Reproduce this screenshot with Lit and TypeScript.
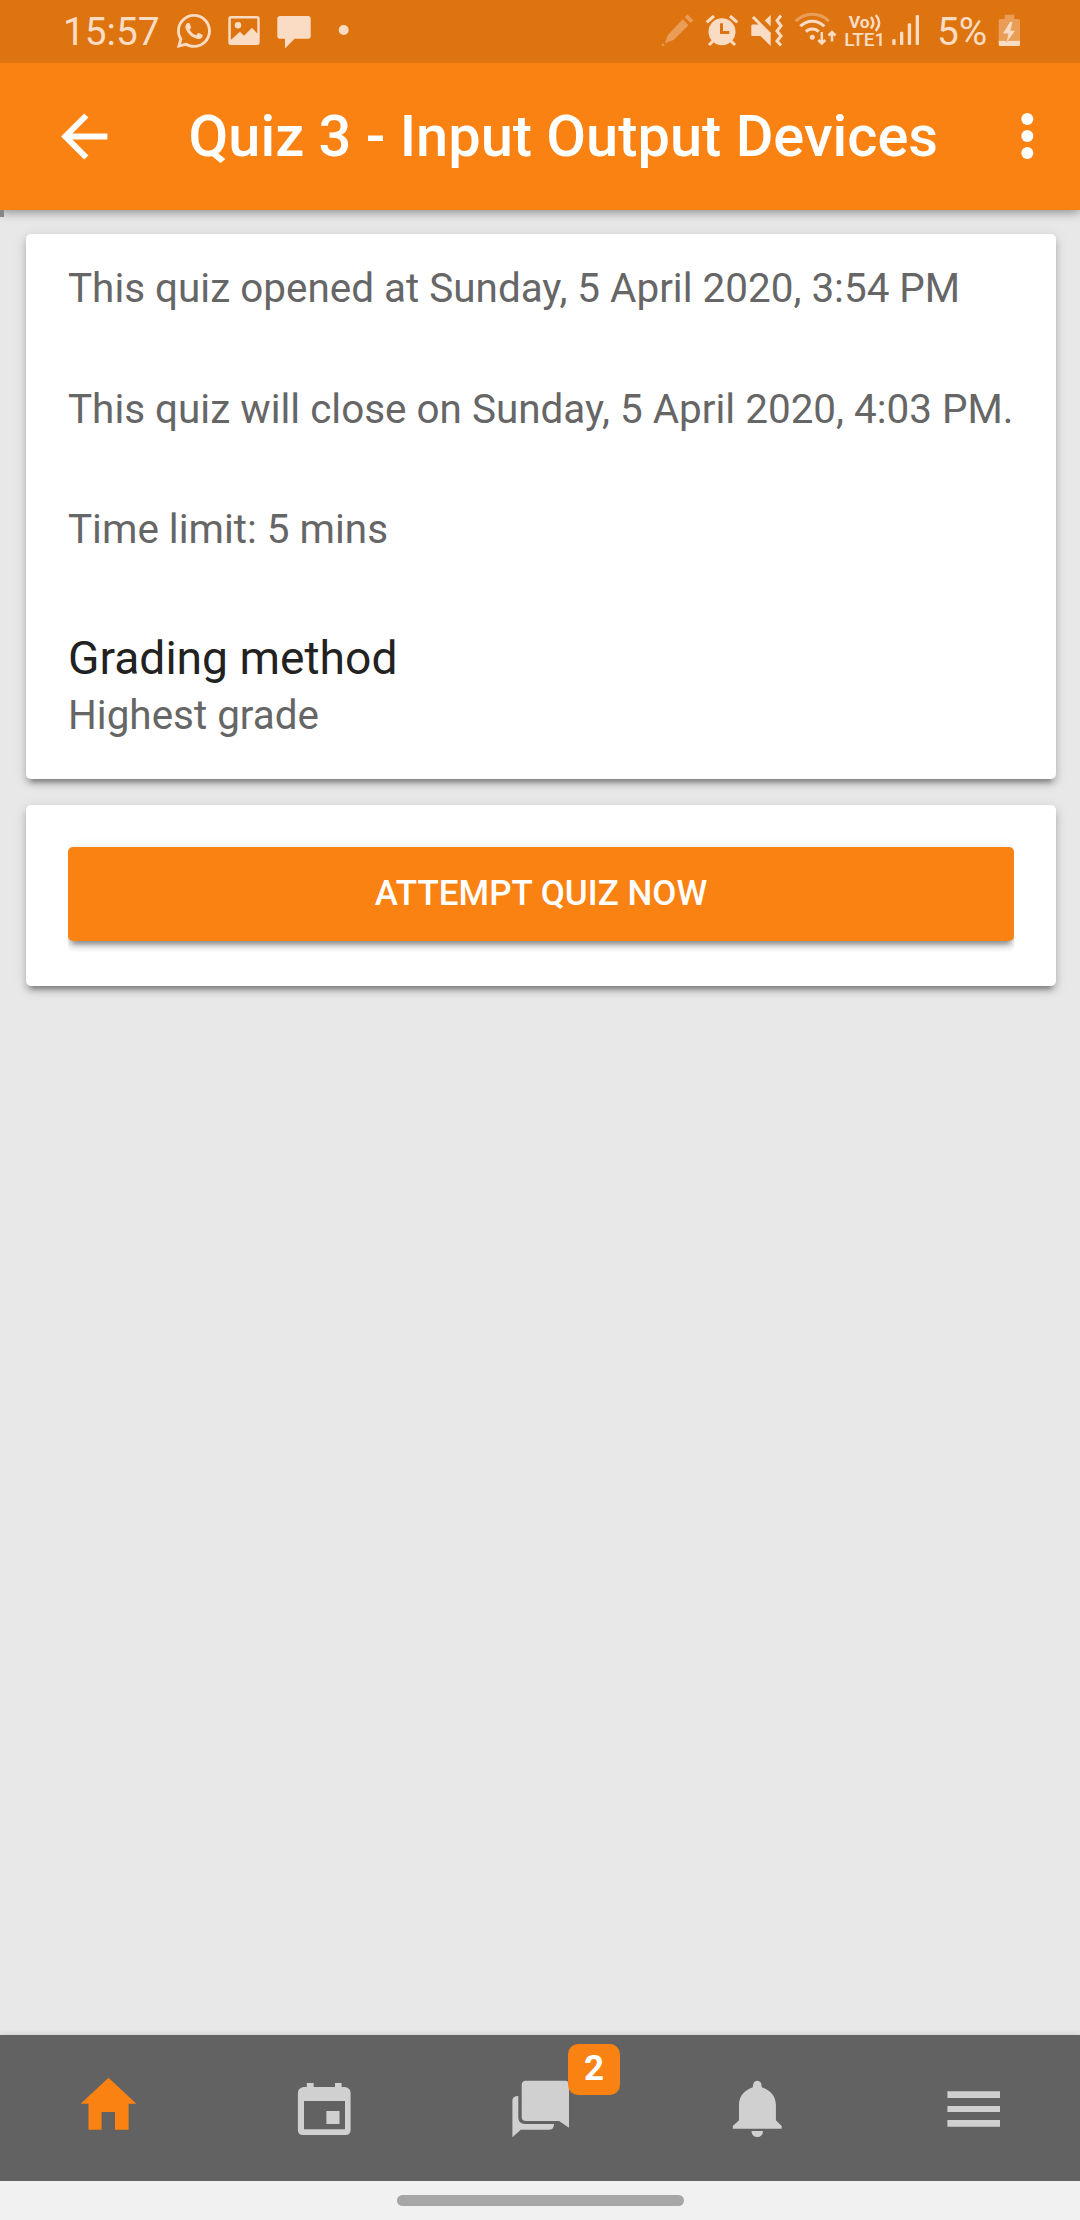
import { LitElement, html, css, svg } from "lit";
import { customElement } from "lit/decorators.js";

@customElement("status-bar")
class StatusBar extends LitElement {
  static styles = css`
    :host {
      display: flex;
      justify-content: space-between;
      height: 63px;
      padding: 0 50px 0 63px;
      background: #de7410;
      color: #f9dcc3;
      font-family: Roboto, sans-serif;
    }
    .group { display: flex; }
    svg { display: block; height: 63px; fill: currentColor; }
    .line { fill: none; stroke: currentColor; stroke-width: 3; }
    .thin { stroke-width: 2.5; }
    .faint { opacity: 0.4; }
    .hole { fill: #de7410; }
    .time, .percent {
      font-size: 38.8px;
      line-height: 63px;
      white-space: nowrap;
    }
    .time { width: 107px; }
    .percent { width: 53px; padding-left: 12px; }
    .volte { font-size: 16.5px; font-weight: 700; }
    .lte { font-size: 17.5px; font-weight: 500; }
  `;

  render() {
    return html`
      <div class="group">
        <div class="time">15:57</div>
        <svg width="50" viewBox="170 0 50 63">
          <path transform="translate(173.4 10.5) scale(1.71)" d="M12.04 2C6.58 2 2.13 6.45 2.13 11.91C2.13 13.66 2.59 15.36 3.45 16.86L2.05 22L7.3 20.62C8.75 21.41 10.38 21.83 12.04 21.83C17.5 21.83 21.95 17.38 21.95 11.92C21.95 9.27 20.92 6.78 19.05 4.91C17.18 3.03 14.69 2 12.04 2M12.05 3.67C14.25 3.67 16.31 4.53 17.87 6.09C19.42 7.65 20.28 9.72 20.28 11.92C20.28 16.46 16.58 20.15 12.04 20.15C10.56 20.15 9.11 19.76 7.85 19L7.55 18.83L4.43 19.65L5.26 16.61L5.06 16.29C4.24 15 3.8 13.47 3.8 11.91C3.81 7.37 7.5 3.67 12.05 3.67M8.53 7.33C8.37 7.33 8.1 7.39 7.87 7.64C7.65 7.89 7 8.5 7 9.71C7 10.93 7.89 12.1 8 12.27C8.14 12.44 9.76 14.94 12.25 16C12.84 16.27 13.3 16.42 13.66 16.53C14.25 16.72 14.79 16.69 15.22 16.63C15.7 16.56 16.68 16.03 16.89 15.45C17.1 14.87 17.1 14.38 17.04 14.27C16.97 14.17 16.81 14.11 16.56 14C16.31 13.86 15.09 13.26 14.87 13.18C14.64 13.1 14.5 13.06 14.31 13.3C14.15 13.55 13.67 14.11 13.53 14.27C13.38 14.44 13.24 14.46 13 14.34C12.74 14.21 11.94 13.95 11 13.11C10.26 12.45 9.77 11.64 9.62 11.39C9.5 11.15 9.61 11 9.73 10.89C9.84 10.78 10 10.6 10.1 10.45C10.23 10.31 10.27 10.2 10.35 10.04C10.43 9.87 10.39 9.73 10.33 9.61C10.27 9.5 9.77 8.26 9.56 7.77C9.36 7.29 9.16 7.35 9 7.33Z" />
        </svg>
        <svg width="50" viewBox="220 0 50 63">
          <path fill-rule="evenodd" d="M231 16H257Q259.7 16 259.7 18.7V42.3Q259.7 45 257 45H231Q228.3 45 228.3 42.3V18.7Q228.3 16 231 16ZM230.8 18.5V40L240 31.7L244 35.7L252 27.8L257.3 33.5V18.5Z" />
          <circle cx="238" cy="25.3" r="3.2" />
        </svg>
        <svg width="60" viewBox="270 0 60 63">
          <path d="M280 16H308Q310.7 16 310.7 18.7V36Q310.7 38.7 308 38.7H294.5L285 48.5V38.7H280Q277.3 38.7 277.3 36V18.7Q277.3 16 280 16Z" />
        </svg>
        <svg width="30" viewBox="330 0 30 63"><circle cx="343.7" cy="30" r="5" /></svg>
      </div>
      <div class="group">
        <svg width="45" viewBox="655 0 45 63">
          <g class="faint">
            <path d="M682.7 19.3L688.5 25.3L673.5 40L665 43.2L667.5 35.5ZM684.7 17.2L687.5 14.5L693.3 20.2L690.6 23ZM661.8 46L662.3 43L665 45.5Z" />
          </g>
        </svg>
        <svg width="45" viewBox="700 0 45 63">
          <circle cx="722" cy="31.8" r="13.5" />
          <path class="line" d="M706.7 22.3L714 16M730 16L737.3 22.3M709 45L714 40M735 45L730 40" />
          <path class="hole" d="M720 23.3H723V31H729.3V34H720Z" />
        </svg>
        <svg width="45" viewBox="745 0 45 63">
          <path d="M752 24.5H760L770.7 34V46L760.5 36H752Q751.3 36 751.3 35V25.5ZM764.8 20.6L770.7 15V26.5Z" />
          <path class="line" d="M753 17L770.2 34.2M781 15.5L777 20.5L781 25.8L777 31L781 36L777 41L781 45.5" />
        </svg>
        <svg width="52" viewBox="790 0 52 63">
          <circle cx="812.3" cy="37.3" r="2.5" />
          <path class="line" d="M805.9 31.6A9 9 0 0 1 818.7 31.6M800.3 26.3A16.6 16.6 0 0 1 824.3 26.3" />
          <path class="line faint" d="M795.7 21.2A23.2 23.2 0 0 1 828.9 21.2" />
          <path class="line thin" d="M821.8 32V43M818.3 40L821.8 43.5L825.3 40M832 41.5V33M828.5 35.5L832 32L835.5 35.5" />
        </svg>
        <svg width="48" viewBox="842 0 48 63">
          <text class="volte" x="848.7" y="27.5" textLength="21" lengthAdjust="spacingAndGlyphs">Vo</text>
          <path class="line thin" d="M871 17Q875.5 22.5 871 28.5M875.8 15Q882.5 22.5 875.8 31" />
          <text class="lte" x="844.3" y="45.7" textLength="41" lengthAdjust="spacingAndGlyphs">LTE1</text>
        </svg>
        <svg width="35" viewBox="890 0 35 63">
          ${[[892.3, 39], [900, 31.7], [907.8, 23.3], [915.7, 15]].map(
            ([x, y]) => svg`<rect x=${x} y=${y} width="3.3" height=${45 - y} rx="1" />`
          )}
        </svg>
        <div class="percent">5%</div>
        <svg width="40" viewBox="989 0 40 63">
          <path class="faint" d="M1003.7 14.7H1013.3V19H1017.5Q1019 19 1019 20.5V40.7H997.7V20.5Q997.7 19 999.2 19H1003.7Z" />
          <path d="M997.7 40.7H1019V44.5Q1019 46 1017.5 46H999.2Q997.7 46 997.7 44.5Z M1009 22L1002 33.5H1007.5L1005.5 42.5L1014 30.7H1009.3L1011.5 22Z" />
        </svg>
      </div>
    `;
  }
}

@customElement("nav-bar")
class NavBar extends LitElement {
  static styles = css`
    :host {
      display: flex;
      align-items: center;
      height: 147px;
      background: #fa8213;
      color: #fff;
      box-shadow: 0 2px 10px rgba(0, 0, 0, 0.42);
      clip-path: inset(0 0 -20px 0);
      font-family: Roboto, sans-serif;
      z-index: 1;
    }
    svg { display: block; flex: none; }
    .back { margin-left: 54px; }
    h1 {
      flex: 1;
      margin: 0 0 0 74.5px;
      padding-bottom: 2px;
      font-size: 57.75px;
      font-weight: 500;
      line-height: 80px;
      white-space: nowrap;
    }
    .more { margin-right: 23px; }
    .arrow { fill: none; stroke: #fff; stroke-width: 6; }
    .dots { fill: #fff; }
  `;

  render() {
    return html`
      <svg class="back" width="60" height="60" viewBox="0 0 60 60">
        <path class="arrow" d="M53.4 29.5H11M32.3 8.5L11.3 29.5L32.3 50.5" />
      </svg>
      <h1>Quiz 3 - Input Output Devices</h1>
      <svg class="more" width="60" height="60" viewBox="0 0 60 60">
        <g class="dots">
          <circle cx="30.3" cy="12" r="6" />
          <circle cx="30.3" cy="29" r="6" />
          <circle cx="30.3" cy="46" r="6" />
        </g>
      </svg>
    `;
  }
}

@customElement("tab-bar")
class TabBar extends LitElement {
  static styles = css`
    :host {
      display: grid;
      grid-template-columns: repeat(5, 1fr);
      height: 146px;
      background: #626262;
      box-shadow: 0 0 6px rgba(0, 0, 0, 0.17);
      font-family: Roboto, sans-serif;
    }
    .tab {
      position: relative;
      display: flex;
      justify-content: center;
      align-items: center;
      color: #d0d0d0;
    }
    .tab.active { color: #fa8213; }
    svg { display: block; fill: currentColor; }
    .badge {
      position: absolute;
      left: 136px;
      top: 9px;
      width: 52px;
      height: 51px;
      border-radius: 10px;
      background: #fa8213;
      color: #fff;
      font-size: 35px;
      font-weight: 700;
      line-height: 49px;
      text-align: center;
    }
  `;

  tabs = [
    { icon: svg`<path d="M36.5 5.7L64.4 31.7H56.6V57.7H43V40H29.6V57.7H16.5V31.7H8.6Z" />`, active: true },
    { icon: svg`<path fill-rule="evenodd" d="M18.8 11H25.7V15H47V11H53.6V15H57Q62.6 16 62.6 21V58Q62.6 63 57.5 63H15Q9.9 63 9.9 58V21Q9.9 16 15.5 15H18.8ZM16 29V57.3H57V29ZM38.4 39H51.5V52H38.4Z" />` },
    { icon: svg`<path d="M22 8.7H61Q65 8.7 65 12.7V55.7L55 49H22Q17.7 49 17.7 44.7V13Q17.7 8.7 22 8.7ZM14.3 24V45.5Q14.3 52 21 52H50Q50 57.7 45.5 57.7H16.7L8.4 65.3V28.5Q8.4 24 14.3 24Z" />`, badge: 2 },
    { icon: svg`<path d="M37.3 8.7Q41.8 8.7 41.8 15.3C50 18 55.9 24 55.9 33V48.3L61.7 54V56.7H12.8V54L19 48.3V33C19 24 24.6 18 32.8 15.3Q32.8 8.7 37.3 8.7ZM31.4 59H43.1Q42.5 65 37.3 65Q32 65 31.4 59Z" />` },
    { icon: svg`<path d="M11.4 19.3H64V26H11.4ZM11.4 34H64V40H11.4ZM11.4 48H64V54.7H11.4Z" />` },
  ] as { icon: unknown; active?: boolean; badge?: number }[];

  render() {
    return this.tabs.map(
      (t) => html`
        <div class="tab ${t.active ? "active" : ""}">
          <svg width="72" height="72" viewBox="0 0 72 72">${t.icon}</svg>
          ${t.badge ? html`<span class="badge">${t.badge}</span>` : ""}
        </div>
      `
    );
  }
}

@customElement("app-root")
class AppRoot extends LitElement {
  static styles = css`
    :host {
      display: flex;
      flex-direction: column;
      width: 1080px;
      height: 2220px;
      overflow: hidden;
      background: #e8e8e8;
      font-family: Roboto, sans-serif;
    }
    * { box-sizing: border-box; }
    main {
      flex: 1;
      display: flex;
      flex-direction: column;
      gap: 26px;
      padding: 0 24px 0 26px;
    }
    .progress {
      width: 4px;
      height: 7px;
      margin: 0 0 -9px -26px;
      background: #868686;
      z-index: 2;
    }
    .card, button {
      border-radius: 5px;
      box-shadow: 0 5px 6px rgba(0, 0, 0, 0.18), 0 8px 4px -5px rgba(0, 0, 0, 0.24),
        0 3px 14px rgba(0, 0, 0, 0.13);
    }
    .card { background: #fff; }
    .info { height: 545px; padding: 29px 42px 0; }
    p {
      margin: 0 0 70.6px;
      font-size: 40.43px;
      line-height: 50px;
      color: #666;
      white-space: nowrap;
    }
    h2 {
      margin: 77px 0 4.6px;
      font-size: 46.2px;
      font-weight: 400;
      line-height: 54px;
      color: #222;
    }
    .action { height: 181px; padding: 33px 42px; }
    .clip { overflow: hidden; padding: 9px 0 11px; }
    button {
      display: block;
      width: 100%;
      height: 94px;
      padding: 0 0 1px;
      border: 0;
      background: #fa8213;
      color: #fff;
      font: 500 35px Roboto, sans-serif;
      text-transform: uppercase;
    }
    .gesture {
      display: flex;
      justify-content: center;
      height: 39px;
      padding-top: 14px;
      background: #f1f1f1;
      z-index: 1;
    }
    .handle {
      width: 287px;
      height: 11px;
      border-radius: 6px;
      background: #a6a6a6;
    }
  `;

  render() {
    return html`
      <status-bar></status-bar>
      <nav-bar></nav-bar>
      <main>
        <div class="progress"></div>
        <section class="card info">
          <p>This quiz opened at Sunday, 5 April 2020, 3:54 PM</p>
          <p>This quiz will close on Sunday, 5 April 2020, 4:03 PM.</p>
          <p>Time limit: 5 mins</p>
          <h2>Grading method</h2>
          <p>Highest grade</p>
        </section>
        <section class="card action">
          <div class="clip"><button>Attempt quiz now</button></div>
        </section>
      </main>
      <tab-bar></tab-bar>
      <div class="gesture"><div class="handle"></div></div>
    `;
  }
}
